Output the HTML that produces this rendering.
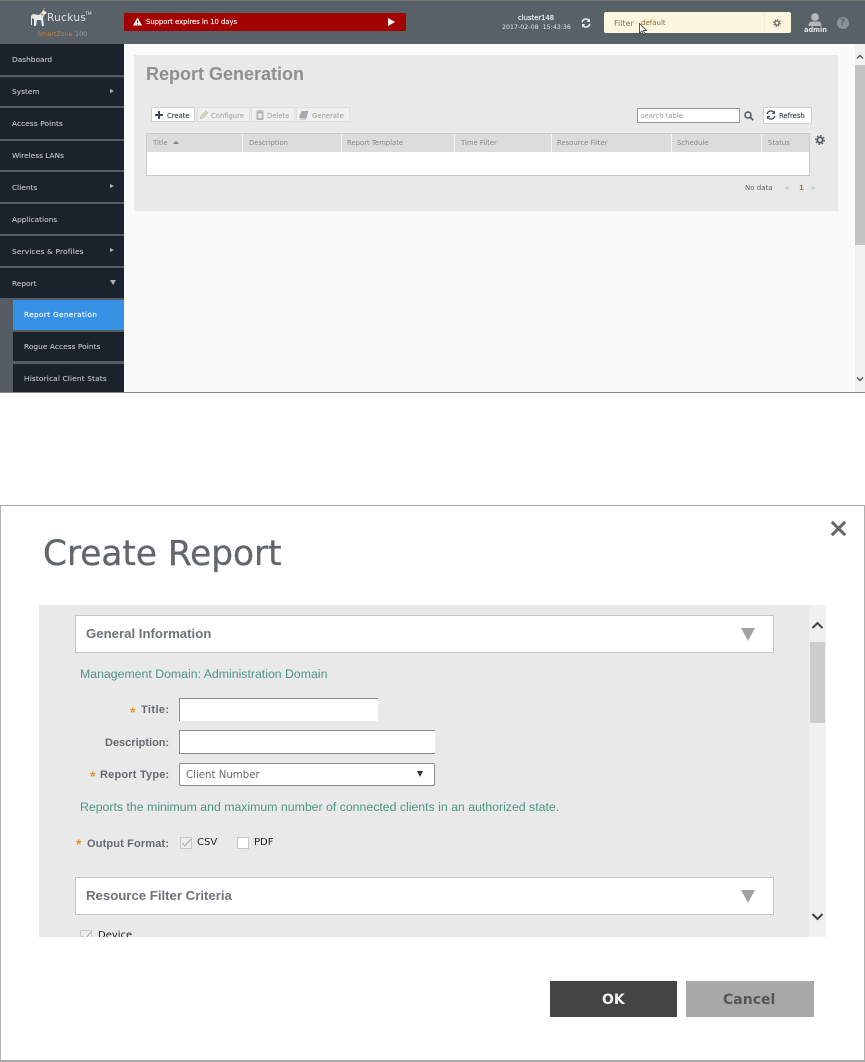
<!DOCTYPE html>
<html><head><meta charset="utf-8"><title>Report</title>
<style>
html,body{margin:0;padding:0;background:#fff}
#p{position:relative;width:865px;height:1062px;overflow:hidden;background:#fff;font-family:"DejaVu Sans",sans-serif;filter:blur(.3px)}
#p div,#p span.t{position:absolute}
.t{position:absolute;white-space:nowrap;line-height:12px}
.n{font-size:7.4px;color:#c2c6ca;left:12px;-webkit-text-stroke:.1px #c2c6ca}
.s{position:absolute;left:0;width:124px;height:2px;background:#565c63}
.a{position:absolute;left:110px;width:0;height:0;border-left:4px solid #aeb2b6;border-top:2.5px solid transparent;border-bottom:2.5px solid transparent}
.b{position:absolute;height:15px;top:107px;background:#f0f0f0;border:1px solid #dfdfdf;box-sizing:border-box;border-radius:1px}
.bt{font-size:6.8px;color:#aeaeae;top:109.5px;-webkit-text-stroke:.2px #aeaeae}
.h{font-size:6.85px;color:#83888d;top:137px}
.v{position:absolute;top:134px;width:1px;height:18px;background:#f4f4f4}
.l{font-family:"Liberation Sans",sans-serif;font-weight:bold;font-size:11px;color:#666a70}
.sec{position:absolute;left:75px;width:699px;height:38px;background:#fff;border:1px solid #c6c6c6;box-sizing:border-box}
.sect{font-family:"Liberation Sans",sans-serif;font-weight:bold;font-size:13.2px;color:#6f7379;left:86px}
.tri{position:absolute;left:741px;width:0;height:0;border-top:13px solid #a3a3a3;border-left:7px solid transparent;border-right:7px solid transparent}
.g{font-family:"Liberation Sans",sans-serif;font-size:12.3px;color:#4f9485;left:80px}
.o{color:#f08a2c;font-family:"Liberation Sans",sans-serif;font-weight:bold;font-size:14px}
.c{position:absolute;width:12px;height:12px;background:#ededed;border:1px solid #c8c8c8;box-sizing:border-box}
</style></head><body><div id="p">

<!-- top app frame -->
<div style="left:0;top:0;width:865px;height:393px;background:#fafafa;overflow:hidden">
  <div style="left:0;top:0;width:865px;height:44px;background:#586068"></div>
  <div style="left:0;top:0;width:865px;height:1px;background:#777"></div>

  <!-- logo -->
  <svg style="position:absolute;left:30px;top:7px" width="20" height="20" viewBox="0 0 20 20"><path d="M1 9 L3 7 L9 8 L12 5 L13 3 L15 4 L17 6 L14 8 L13 11 L14 19 L12 19 L11 13 L7 13 L6 19 L4 19 L4 12 L2 11 L2 18 L1 18 Z" fill="#e8e8e8"/><path d="M13 3 L15 1" stroke="#b07a50" stroke-width="1.5"/><path d="M11 7 L13 8" stroke="#d2843a" stroke-width="1.5"/></svg>
  <span class="t" style="left:47px;top:12px;font-size:10.5px;color:#dfe1e3;letter-spacing:.35px">Ruckus</span>
  <span class="t" style="left:85px;top:9px;font-size:4.5px;color:#dfe1e3">TM</span>
  <span class="t" style="left:37px;top:28px;font-size:6.4px;color:#c9803f">SmartZone</span>
  <span class="t" style="left:75px;top:28px;font-size:6.4px;color:#9aa0a5">100</span>

  <!-- banner -->
  <div style="left:124px;top:13px;width:282px;height:18px;background:#a30000;border-radius:1px"></div>
  <svg style="position:absolute;left:133px;top:17px" width="9" height="9" viewBox="0 0 9 9"><path d="M4.5 0.5 L9 8.5 L0 8.5 Z" fill="#fff"/><path d="M4.5 3.2 V6 M4.5 6.8 V7.8" stroke="#a30000"/></svg>
  <span class="t" style="left:146px;top:16px;font-size:6.8px;color:#f5e4e4;-webkit-text-stroke:.2px #f5e4e4">Support expires in 10 days</span>
  <div style="left:388px;top:18px;width:0;height:0;border-left:7px solid #fff;border-top:4px solid transparent;border-bottom:4px solid transparent"></div>

  <!-- cluster -->
  <span class="t" style="left:518px;top:12px;font-size:6.8px;color:#e9ebed;-webkit-text-stroke:.2px #e9ebed">cluster148</span>
  <span class="t" style="left:502px;top:22px;font-size:6.3px;color:#e3e5e7">2017-02-08&nbsp; 15:43:36</span>
  <svg style="position:absolute;left:581px;top:18px" width="10" height="10" viewBox="0 0 10 10"><path d="M1.2 4.2 A3.8 3.8 0 0 1 8 2.5 M8.8 5.8 A3.8 3.8 0 0 1 2 7.5" fill="none" stroke="#eee" stroke-width="1.5"/><path d="M9 0.5 V4 H5.8 Z M1 9.5 V6 H4.2 Z" fill="#eee"/></svg>

  <!-- filter -->
  <div style="left:604px;top:12px;width:187px;height:21px;background:#fdf6df;border-radius:2px"></div>
  <div style="left:764px;top:13px;width:1px;height:19px;background:#f2ead2"></div>
  <span class="t" style="left:614px;top:18px;font-size:8px;color:#77736a">Filter</span>
  <span class="t" style="left:641px;top:17px;font-size:7px;color:#8a6a3a">default</span>
  <svg style="position:absolute;left:773px;top:19px" width="8" height="8" viewBox="0 0 8 8"><circle cx="4" cy="4" r="2.1" fill="none" stroke="#6d6d6d" stroke-width="1.4"/><circle cx="4" cy="4" r="3.3" fill="none" stroke="#6d6d6d" stroke-width="1.2" stroke-dasharray="1.3 1.3"/></svg>
  <svg style="position:absolute;left:639px;top:23px" width="9" height="13" viewBox="0 0 9 13"><path d="M0.5 0.5 V10 L3 8 L4.5 11.5 L6 11 L4.5 7.5 L7.5 7.5 Z" fill="#fff" stroke="#333" stroke-width=".8"/></svg>

  <!-- user -->
  <svg style="position:absolute;left:808px;top:12px" width="15" height="15" viewBox="0 0 15 15"><circle cx="7" cy="5" r="3.9" fill="#b4b8bb"/><path d="M0.5 14 Q0.5 9.5 4 9.5 H10 Q13.5 9.5 13.5 14 Z" fill="#b4b8bb"/></svg>
  <span class="t" style="left:804px;top:24px;font-size:6.6px;font-weight:bold;color:#e3e5e7">admin</span>
  <div style="left:837px;top:17px;width:12px;height:12px;border-radius:50%;background:#8d9296"></div>
  <span class="t" style="left:840px;top:17px;font-size:9px;font-weight:bold;color:#5c6269">?</span>

  <!-- sidebar -->
  <div style="left:0;top:44px;width:124px;height:349px;background:#1b222b"></div>
  <span class="t n" style="top:54px">Dashboard</span><div class="s" style="top:75px"></div><div class="s" style="top:77px;height:1px;background:#2a3038"></div>
  <span class="t n" style="top:86px">System</span><div class="a" style="top:89px"></div><div class="s" style="top:106px"></div>
  <span class="t n" style="top:118px;letter-spacing:.08px">Access Points</span><div class="s" style="top:139px"></div>
  <span class="t n" style="top:150px">Wireless LANs</span><div class="s" style="top:170px"></div>
  <span class="t n" style="top:182px">Clients</span><div class="a" style="top:184px"></div><div class="s" style="top:202px"></div>
  <span class="t n" style="top:214px">Applications</span><div class="s" style="top:234px"></div>
  <span class="t n" style="top:246px;letter-spacing:.17px">Services &amp; Profiles</span><div class="a" style="top:248px"></div><div class="s" style="top:266px"></div>
  <span class="t n" style="top:278px">Report</span>
  <div style="left:110px;top:280px;width:0;height:0;border-top:5px solid #aeb2b6;border-left:3px solid transparent;border-right:3px solid transparent"></div>
  <div style="left:0;top:298px;width:124px;height:95px;background:#565c63"></div>
  <div style="left:13px;top:300px;width:111px;height:30px;background:#3691e4"></div>
  <div style="left:13px;top:332px;width:111px;height:29px;background:#1b222b"></div>
  <div style="left:13px;top:364px;width:111px;height:29px;background:#1b222b"></div>
  <span class="t" style="left:24px;top:309px;font-size:7.4px;color:#f4f9fe;letter-spacing:.3px;-webkit-text-stroke:.15px #f4f9fe">Report Generation</span>
  <span class="t n" style="left:24px;top:341px;letter-spacing:.05px">Rogue Access Points</span>
  <span class="t n" style="left:24px;top:373px;letter-spacing:.14px">Historical Client Stats</span>

  <!-- content -->
  <div style="left:134px;top:55px;width:704px;height:156px;background:#e9e9e9"></div>
  <span class="t" style="left:146px;top:64px;font-family:'Liberation Sans',sans-serif;font-weight:bold;font-size:18px;line-height:20px;color:#8f8f8f">Report Generation</span>

  <div class="b" style="left:151px;width:44px;background:#fff;border-color:#d0d0d0"></div>
  <div style="left:155px;top:114px;width:8px;height:2px;background:#3f4a55"></div>
  <div style="left:158px;top:111px;width:2px;height:8px;background:#3f4a55"></div>
  <span class="t" style="left:167px;top:109.5px;font-size:6.8px;color:#4c535a;-webkit-text-stroke:.2px #4c535a">Create</span>
  <div class="b" style="left:197px;width:53px"></div>
  <svg style="position:absolute;left:199px;top:110px" width="10" height="10" viewBox="0 0 10 10"><path d="M1 9 L2 6 L7 1 L9 3 L4 8 Z" fill="#d8d8c0" stroke="#c2c2b4" stroke-width=".7"/></svg>
  <span class="t bt" style="left:211px">Configure</span>
  <div class="b" style="left:251px;width:44px"></div>
  <svg style="position:absolute;left:256px;top:110px" width="8" height="10" viewBox="0 0 8 10"><path d="M1 2 H7 V9.5 H1 Z M0.5 1 H7.5 M3 0.5 H5" fill="#b8b8b8" stroke="#aaa" stroke-width=".8"/><path d="M2.3 3.5 H5.7 V8 H2.3 Z" fill="#eee"/></svg>
  <span class="t bt" style="left:267px">Delete</span>
  <div class="b" style="left:296px;width:54px"></div>
  <svg style="position:absolute;left:299px;top:110px" width="10" height="10" viewBox="0 0 10 10"><path d="M2.5 1 H9.5 L7.5 8 H1 Q0 8 .5 6.5 Z" fill="#a5a9ad"/><path d="M1 9 H7.5" stroke="#a5a9ad"/></svg>
  <span class="t bt" style="left:312px">Generate</span>

  <div style="left:637px;top:108px;width:103px;height:15px;background:#fff;border:1px solid #9a9a9a;box-sizing:border-box"></div>
  <span class="t" style="left:641px;top:110px;font-size:6.8px;color:#9a9a9a">search table</span>
  <svg style="position:absolute;left:744px;top:111px" width="10" height="10" viewBox="0 0 10 10"><circle cx="4" cy="4" r="3" fill="none" stroke="#4a525a" stroke-width="1.4"/><path d="M6.3 6.3 L9.2 9.2" stroke="#4a525a" stroke-width="1.6"/></svg>
  <div style="left:763px;top:107px;width:49px;height:17px;background:#fff;border:1px solid #d0d0d0;box-sizing:border-box;border-radius:1px"></div>
  <svg style="position:absolute;left:766px;top:110px" width="10" height="10" viewBox="0 0 10 10"><path d="M1.2 4.2 A3.8 3.8 0 0 1 8 2.5 M8.8 5.8 A3.8 3.8 0 0 1 2 7.5" fill="none" stroke="#4a525a" stroke-width="1.4"/><path d="M9 0.5 V4 H5.8 Z M1 9.5 V6 H4.2 Z" fill="#4a525a"/></svg>
  <span class="t" style="left:779px;top:109.5px;font-size:6.8px;color:#4c535a;-webkit-text-stroke:.2px #4c535a">Refresh</span>

  <!-- table -->
  <div style="left:146px;top:133px;width:664px;height:43px;background:#fff;border:1px solid #c9cbd0;box-sizing:border-box"></div>
  <div style="left:147px;top:134px;width:662px;height:18px;background:#dcdcdc"></div>
  <div class="v" style="left:242px"></div><div class="v" style="left:341px"></div><div class="v" style="left:454px"></div><div class="v" style="left:551px"></div><div class="v" style="left:671px"></div><div class="v" style="left:761px"></div>
  <span class="t h" style="left:153px">Title</span>
  <div style="left:173px;top:141px;width:0;height:0;border-bottom:3px solid #7c8288;border-left:3px solid transparent;border-right:3px solid transparent"></div>
  <span class="t h" style="left:249px">Description</span>
  <span class="t h" style="left:347px">Report Template</span>
  <span class="t h" style="left:461px">Time Filter</span>
  <span class="t h" style="left:557px">Resource Filter</span>
  <span class="t h" style="left:677px">Schedule</span>
  <span class="t h" style="left:768px">Status</span>
  <svg style="position:absolute;left:815px;top:135px" width="10" height="10" viewBox="0 0 10 10"><circle cx="5" cy="5" r="2.6" fill="none" stroke="#555c63" stroke-width="1.8"/><circle cx="5" cy="5" r="4.2" fill="none" stroke="#555c63" stroke-width="1.5" stroke-dasharray="1.65 1.65"/></svg>
  <span class="t" style="left:745px;top:182px;font-size:7px;color:#5c6065">No data</span>
  <span class="t" style="left:785px;top:182px;font-size:7px;color:#a8a8a8">&#171;</span>
  <span class="t" style="left:799px;top:182px;font-size:7px;font-weight:bold;color:#8a7a5a">1</span>
  <span class="t" style="left:811px;top:182px;font-size:7px;color:#a8a8a8">&#187;</span>

  <!-- page scrollbar -->
  <div style="left:855px;top:44px;width:10px;height:349px;background:#f1f1f1"></div>
  <div style="left:855px;top:65px;width:10px;height:180px;background:#c4c4c4"></div>
  <svg style="position:absolute;left:856px;top:54px" width="8" height="6" viewBox="0 0 8 6"><path d="M1 4.5 L4 1.5 L7 4.5" fill="none" stroke="#555" stroke-width="1.4"/></svg>
  <svg style="position:absolute;left:856px;top:376px" width="8" height="6" viewBox="0 0 8 6"><path d="M1 1.5 L4 4.5 L7 1.5" fill="none" stroke="#555" stroke-width="1.4"/></svg>
  <div style="left:0;top:392px;width:865px;height:1px;background:#8c8c8c"></div>
</div>

<!-- dialog -->
<div style="left:0;top:505px;width:865px;height:1px;background:#a8a8a8"></div>
<div style="left:0;top:505px;width:1px;height:556px;background:#b0b0b0"></div>
<div style="left:864px;top:505px;width:1px;height:556px;background:#b0b0b0"></div>
<div style="left:0;top:1060px;width:865px;height:2px;background:#a8a8a8"></div>

<span class="t" style="left:43px;top:532px;font-size:34.3px;line-height:44px;color:#63676b;-webkit-text-stroke:.3px #63676b">Create Report</span>
<svg style="position:absolute;left:830px;top:520px" width="17" height="17" viewBox="0 0 17 17"><path d="M1.8 1.8 L15.2 15.2 M15.2 1.8 L1.8 15.2" stroke="#666" stroke-width="3"/></svg>

<div style="left:39px;top:605px;width:787px;height:332px;background:#e9e9e9;overflow:hidden">
  <div style="left:41px;top:325px;width:12px;height:12px;background:#ededed;border:1px solid #c8c8c8;box-sizing:border-box"></div>
  <svg style="position:absolute;left:41px;top:325px" width="12" height="12" viewBox="0 0 12 12"><path d="M2.5 6 L5 9 L11 2" fill="none" stroke="#a8a8a8" stroke-width="1"/></svg>
  <span class="t" style="left:59px;top:325px;font-size:10px;color:#222">Device</span>
</div>
<div style="left:809px;top:605px;width:17px;height:332px;background:#f0f0f0"></div>
<div style="left:810px;top:642px;width:15px;height:81px;background:#cdcdcd"></div>
<svg style="position:absolute;left:811px;top:620px" width="13" height="10" viewBox="0 0 13 10"><path d="M1.5 8 L6.5 3 L11.5 8" fill="none" stroke="#444" stroke-width="2"/></svg>
<svg style="position:absolute;left:811px;top:912px" width="13" height="10" viewBox="0 0 13 10"><path d="M1.5 2 L6.5 7 L11.5 2" fill="none" stroke="#444" stroke-width="2"/></svg>

<div class="sec" style="top:615px"></div>
<span class="t sect" style="top:628px">General Information</span>
<div class="tri" style="top:628px"></div>
<span class="t g" style="top:668px">Management Domain: Administration Domain</span>

<span class="t o" style="left:130px;top:706px">*</span>
<span class="t l" style="left:141px;top:704px;letter-spacing:.4px">Title:</span>
<div style="left:179px;top:698px;width:199px;height:23px;background:#fff;border-top:1px solid #8d8d8d;border-left:1px solid #8d8d8d;box-sizing:border-box"></div>
<span class="t l" style="left:105px;top:737px">Description:</span>
<div style="left:179px;top:730px;width:256px;height:24px;background:#fff;border-top:1px solid #8d8d8d;border-left:1px solid #8d8d8d;border-bottom:1px solid #8d8d8d;box-sizing:border-box"></div>
<span class="t o" style="left:90px;top:770px">*</span>
<span class="t l" style="left:100px;top:769px;letter-spacing:.2px">Report Type:</span>
<div style="left:179px;top:763px;width:256px;height:23px;background:#fff;border:1px solid #8d8d8d;box-sizing:border-box;border-radius:2px"></div>
<span class="t" style="left:186px;top:770px;font-size:10.2px;color:#666a6e">Client Number</span>
<div style="left:417px;top:771px;width:0;height:0;border-top:6px solid #333;border-left:3.5px solid transparent;border-right:3.5px solid transparent"></div>

<span class="t g" style="top:801px">Reports the minimum and maximum number of connected clients in an authorized state.</span>

<span class="t o" style="left:76px;top:838px">*</span>
<span class="t l" style="left:87px;top:838px;letter-spacing:.15px">Output Format:</span>
<div class="c" style="left:180px;top:837px"></div>
<svg style="position:absolute;left:180px;top:837px" width="12" height="12" viewBox="0 0 12 12"><path d="M2.5 6 L5 9 L11 2" fill="none" stroke="#a8a8a8" stroke-width="1"/></svg>
<span class="t" style="left:197px;top:837px;font-size:10px;color:#222">CSV</span>
<div class="c" style="left:237px;top:837px;background:#fff"></div>
<span class="t" style="left:254px;top:837px;font-size:10px;color:#222">PDF</span>

<div class="sec" style="top:877px"></div>
<span class="t sect" style="top:890px">Resource Filter Criteria</span>
<div class="tri" style="top:890px"></div>

<div style="left:550px;top:981px;width:127px;height:36px;background:#444"></div>
<span class="t" style="left:602px;top:992px;font-size:14px;line-height:16px;font-weight:bold;color:#f4f4f4">OK</span>
<div style="left:686px;top:981px;width:128px;height:36px;background:#a8a8a8"></div>
<span class="t" style="left:723px;top:992px;font-size:14px;line-height:16px;font-weight:bold;color:#555">Cancel</span>

</div></body></html>
